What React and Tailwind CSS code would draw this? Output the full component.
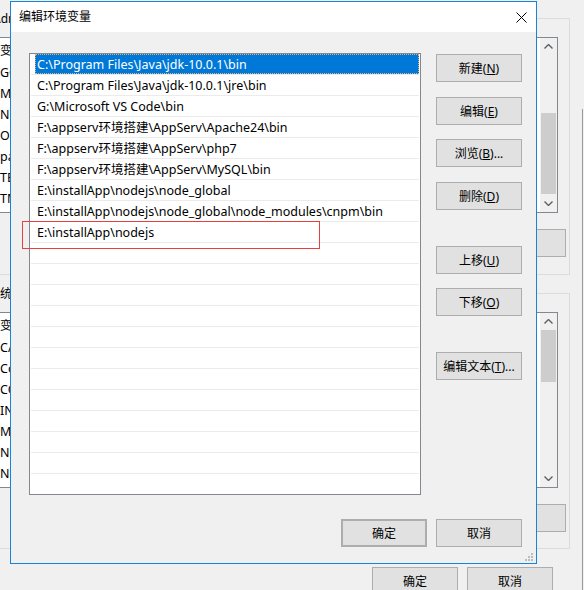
import React from "react";

const PATHS = [
  "C:\\Program Files\\Java\\jdk-10.0.1\\bin",
  "C:\\Program Files\\Java\\jdk-10.0.1\\jre\\bin",
  "G:\\Microsoft VS Code\\bin",
  "F:\\appserv环境搭建\\AppServ\\Apache24\\bin",
  "F:\\appserv环境搭建\\AppServ\\php7",
  "F:\\appserv环境搭建\\AppServ\\MySQL\\bin",
  "E:\\installApp\\nodejs\\node_global",
  "E:\\installApp\\nodejs\\node_global\\node_modules\\cnpm\\bin",
  "E:\\installApp\\nodejs",
];

const USER_VARS = ["GOPATH", "MAVEN_HOME", "NODE_PATH", "OneDrive", "path", "TEMP", "TMP"];
const SYS_VARS = ["CATALINA_HOME", "ComSpec", "COMPUTERNAME", "INCLUDE", "MAVEN", "NODE_PATH", "NUMBER_OF_PROCESSORS", "OS"];

function Chevron({ down }) {
  return (
    <svg width="9" height="5" viewBox="0 0 9 5">
      <path
        d={down ? "M0.5 0.5 L4.5 4.5 L8.5 0.5" : "M0.5 4.5 L4.5 0.5 L8.5 4.5"}
        stroke="#606060"
        strokeWidth="1.4"
        fill="none"
      />
    </svg>
  );
}

function Btn({ children, className = "" }) {
  return (
    <div
      className={`flex h-[28px] w-[86px] shrink-0 items-center justify-center border border-[#adadad] bg-[#e1e1e1] pt-px text-[12px] leading-none text-black ${className}`}
    >
      {children}
    </div>
  );
}

// list in the window behind (only its edges show)
function BgList({ rows, thumbTop, thumbH }) {
  return (
    <div className="ml-[10px] mt-[18px] flex h-[176px] w-[564px] shrink-0 border border-[#828790] bg-white">
      <div className="flex-1 overflow-hidden">
        <div className="flex h-[24px] items-center pl-[5px] pt-px text-[12px]">变量</div>
        {rows.map((r, i) => (
          <div key={i} className="flex h-[21px] items-center pl-[5px] pt-[2px] text-[12.5px]">
            {r}
          </div>
        ))}
      </div>
      <div className="flex w-[17px] flex-col bg-[#f0f0f0]">
        <div className="flex h-[17px] items-center justify-center">
          <Chevron />
        </div>
        <div className="flex-1">
          <div className="mx-px bg-[#cdcdcd]" style={{ marginTop: thumbTop, height: thumbH }} />
        </div>
        <div className="flex h-[17px] items-center justify-center">
          <Chevron down />
        </div>
      </div>
    </div>
  );
}

function BackWindow() {
  return (
    <div className="absolute left-[-17px] top-0 flex h-[620px] w-[601px] flex-col bg-[#f0f0f0]">
      <div className="relative mt-[18px] flex h-[257px] w-[587px] shrink-0 flex-col border border-[#dcdcdc]">
        <div className="absolute left-[8px] top-[-8px] bg-[#f0f0f0] px-px text-[12px] leading-[16px]">
          Administrator 的用户变量(U)
        </div>
        <BgList rows={USER_VARS} thumbTop={58} thumbH={81} />
        <div className="mt-[16px] flex gap-[9px] self-start pl-[10px]">
          <div className="w-[287px]" />
          <Btn>新建</Btn>
          <Btn>编辑</Btn>
          <Btn>删除</Btn>
        </div>
      </div>
      <div className="relative mt-[18px] flex h-[256px] w-[587px] shrink-0 flex-col border border-[#dcdcdc]">
        <div className="absolute left-[3px] top-[-8px] bg-[#f0f0f0] px-px text-[12px] leading-[16px]">
          系统变量(S)
        </div>
        <BgList rows={SYS_VARS} thumbTop={0} thumbH={52} />
        <div className="mt-[16px] flex gap-[9px] self-start pl-[10px]">
          <div className="w-[287px]" />
          <Btn>新建</Btn>
          <Btn>编辑</Btn>
          <Btn>删除</Btn>
        </div>
      </div>
      <div className="mt-[18px] flex shrink-0 justify-end gap-[9px] pr-[31px]">
        <Btn>确定</Btn>
        <Btn>取消</Btn>
      </div>
    </div>
  );
}

function PathRow({ text, selected }) {
  return (
    <div className="mx-px flex h-[21px] border-b border-[#ebebeb]">
      {selected ? (
        <div className="ml-[4px] flex h-[20px] flex-1 items-center border border-dotted border-[#d9b27c] bg-[#0078d7] pl-px pt-[2px] text-[12.5px] text-white">
          {text}
        </div>
      ) : (
        <div className="flex h-[20px] flex-1 items-center pl-[6px] pt-[3px] text-[12.5px] text-black">{text}</div>
      )}
    </div>
  );
}

export default function App() {
  const rows = [...PATHS, ...Array(12).fill("")];

  return (
    <div className="relative h-[590px] w-[584px] overflow-hidden bg-[#f0f0f0] font-['Noto_Sans','Noto_Sans_CJK_SC',sans-serif] text-black">
      <BackWindow />

      {/* edge of another window */}
      <div className="absolute bottom-0 left-[582px] top-[109px] w-px bg-[#9a9a9a]" />

      {/* 编辑环境变量 dialog */}
      <div className="absolute left-[10px] top-[1px] flex h-[563px] w-[527px] flex-col border border-[#1883d7] bg-[#f0f0f0]">
        <div className="flex h-[30px] shrink-0 items-center justify-between bg-white pl-[8px] pr-[9px]">
          <span className="text-[12px] leading-none">编辑环境变量</span>
          <svg width="11" height="11" viewBox="0 0 11 11">
            <path d="M0.5 0.5 L10.5 10.5 M10.5 0.5 L0.5 10.5" stroke="#000" strokeWidth="1" fill="none" />
          </svg>
        </div>

        <div className="flex flex-1 flex-col pb-[16px] pl-[18px] pr-[14px] pt-[21px]">
          <div className="flex">
            <div className="h-[442px] w-[392px] overflow-hidden border border-[#828790] bg-white">
              {rows.map((r, i) => (
                <PathRow key={i} text={r} selected={i === 0} />
              ))}
            </div>
            <div className="ml-[15px] flex flex-col pt-px">
              <Btn>
                新建(<span className="underline">N</span>)
              </Btn>
              <Btn className="mt-[15px]">
                编辑(<span className="underline">E</span>)
              </Btn>
              <Btn className="mt-[14px]">
                浏览(<span className="underline">B</span>)...
              </Btn>
              <Btn className="mt-[15px]">
                删除(<span className="underline">D</span>)
              </Btn>
              <Btn className="mt-[36px]">
                上移(<span className="underline">U</span>)
              </Btn>
              <Btn className="mt-[14px]">
                下移(<span className="underline">O</span>)
              </Btn>
              <Btn className="mt-[36px]">
                编辑文本(<span className="underline">T</span>)...
              </Btn>
            </div>
          </div>
          <div className="mt-[24px] flex justify-end gap-[9px]">
            <Btn className="border-2 border-[#0078d7]">确定</Btn>
            <Btn>取消</Btn>
          </div>
        </div>

        <svg className="absolute bottom-[2px] right-[3px]" width="8" height="8" viewBox="0 0 8 8">
          <g fill="#bcbcbc">
            <rect x="6" y="0" width="2" height="2" />
            <rect x="3" y="3" width="2" height="2" />
            <rect x="6" y="3" width="2" height="2" />
            <rect x="0" y="6" width="2" height="2" />
            <rect x="3" y="6" width="2" height="2" />
            <rect x="6" y="6" width="2" height="2" />
          </g>
        </svg>
      </div>

      {/* red annotation box */}
      <div className="absolute left-[22px] top-[221px] h-[28px] w-[298px] border border-[#e8403f]" />
    </div>
  );
}
